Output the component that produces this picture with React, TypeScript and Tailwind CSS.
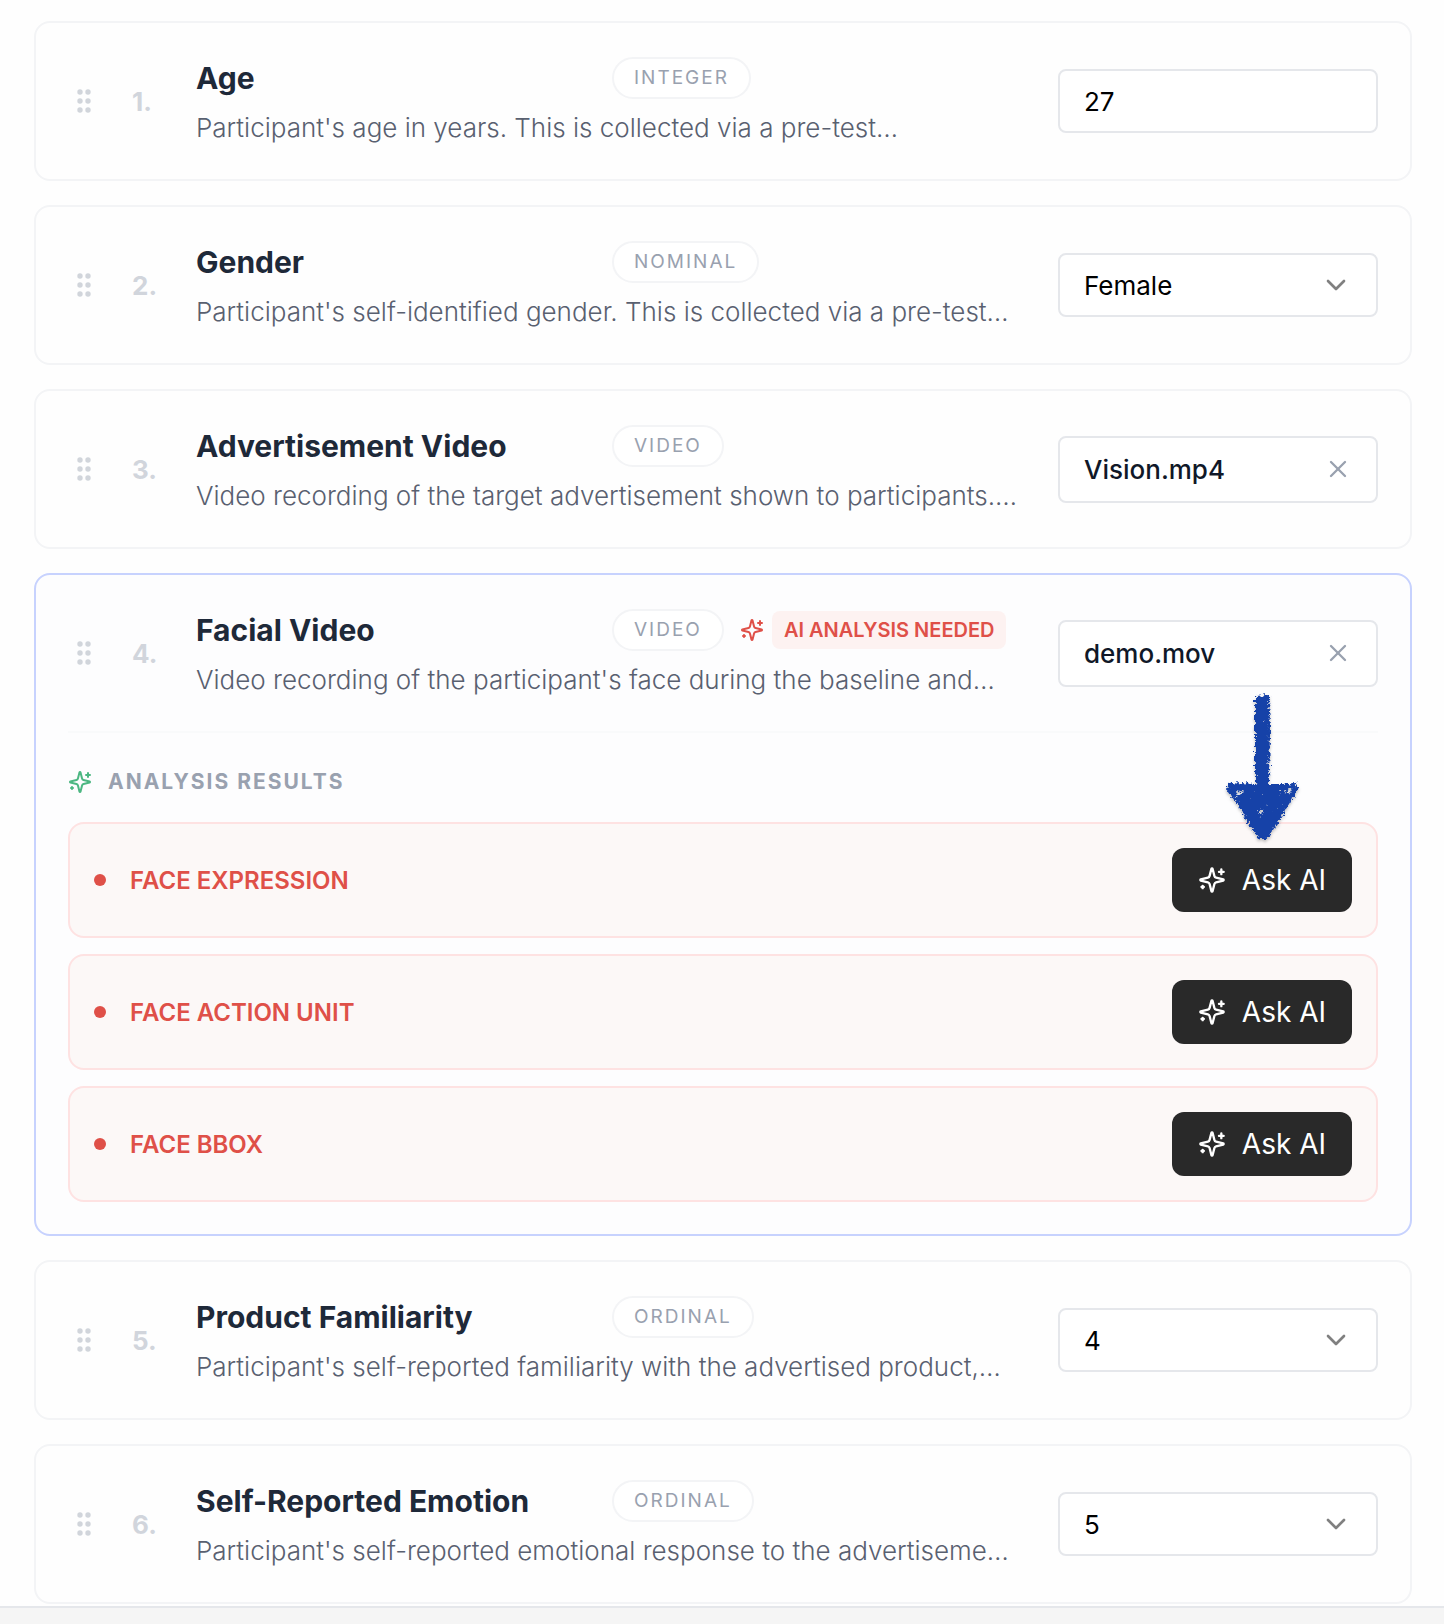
import React from "react";
import { ChevronDown, X } from "lucide-react";

type Control =
  | { kind: "input"; value: string }
  | { kind: "select"; value: string }
  | { kind: "file"; value: string };

type Field = {
  name: string;
  type: string;
  description: string;
  control: Control;
  results?: string[];
};

const fields: Field[] = [
  {
    name: "Age",
    type: "INTEGER",
    description: "Participant's age in years. This is collected via a pre-test…",
    control: { kind: "input", value: "27" },
  },
  {
    name: "Gender",
    type: "NOMINAL",
    description: "Participant's self-identified gender. This is collected via a pre-test…",
    control: { kind: "select", value: "Female" },
  },
  {
    name: "Advertisement Video",
    type: "VIDEO",
    description: "Video recording of the target advertisement shown to participants.…",
    control: { kind: "file", value: "Vision.mp4" },
  },
  {
    name: "Facial Video",
    type: "VIDEO",
    description: "Video recording of the participant's face during the baseline and…",
    control: { kind: "file", value: "demo.mov" },
    results: ["FACE EXPRESSION", "FACE ACTION UNIT", "FACE BBOX"],
  },
  {
    name: "Product Familiarity",
    type: "ORDINAL",
    description: "Participant's self-reported familiarity with the advertised product,…",
    control: { kind: "select", value: "4" },
  },
  {
    name: "Self-Reported Emotion",
    type: "ORDINAL",
    description: "Participant's self-reported emotional response to the advertiseme…",
    control: { kind: "select", value: "5" },
  },
];

function Sparkles({ size, className }: { size: number; className?: string }) {
  return (
    <svg
      width={size}
      height={size}
      viewBox="0 0 24 24"
      fill="none"
      stroke="currentColor"
      strokeWidth="2"
      strokeLinecap="round"
      strokeLinejoin="round"
      aria-hidden="true"
      className={className}
    >
      <path d="M9.937 15.5A2 2 0 0 0 8.5 14.063l-6.135-1.582a.5.5 0 0 1 0-.962L8.5 9.936A2 2 0 0 0 9.937 8.5l1.582-6.135a.5.5 0 0 1 .963 0L14.063 8.5A2 2 0 0 0 15.5 9.937l6.135 1.581a.5.5 0 0 1 0 .964L15.5 14.063a2 2 0 0 0-1.437 1.437l-1.582 6.135a.5.5 0 0 1-.963 0z" />
      <path d="M20 3v4M22 5h-4M4 17v2M5 18H3" />
    </svg>
  );
}

function Grip() {
  return (
    <svg width="14" height="24" viewBox="0 0 14 24" fill="#d1d5db" aria-hidden="true">
      {[3, 12, 21].map((y) => (
        <g key={y}>
          <circle cx="3" cy={y} r="2.7" />
          <circle cx="11" cy={y} r="2.7" />
        </g>
      ))}
    </svg>
  );
}

function FieldControl({ control, label }: { control: Control; label: string }) {
  if (control.kind === "input") {
    return (
      <input
        type="text"
        aria-label={label}
        defaultValue={control.value}
        className="h-16 w-full rounded-lg border-2 border-gray-200 bg-white px-6 text-[26px] text-black"
      />
    );
  }
  if (control.kind === "select") {
    return (
      <div className="relative">
        <select
          aria-label={label}
          defaultValue={control.value}
          className="h-16 w-full appearance-none rounded-lg border-2 border-gray-200 bg-white px-6 text-[26px] text-black"
        >
          <option>{control.value}</option>
        </select>
        <ChevronDown
          size={32}
          strokeWidth={2}
          className="pointer-events-none absolute top-4 right-[26px] text-[#808080]"
        />
      </div>
    );
  }
  return (
    <div className="flex h-[67px] items-center justify-between rounded-lg border-2 border-gray-200 bg-white px-6">
      <span className="text-[26px] font-medium text-gray-900">{control.value}</span>
      <button type="button" aria-label={`Remove ${control.value}`} className="text-gray-400">
        <X size={28} strokeWidth={2} />
      </button>
    </div>
  );
}

function CrayonArrow() {
  return (
    <svg
      width="84"
      height="156"
      viewBox="0 0 84 156"
      aria-hidden="true"
      className="pointer-events-none absolute -top-[134px] right-[73px] z-10"
    >
      <defs>
        <filter id="crayon" x="-10%" y="-10%" width="120%" height="120%">
          <feTurbulence type="fractalNoise" baseFrequency="0.4" numOctaves="3" seed="4" result="noise" />
          <feDisplacementMap
            in="SourceGraphic"
            in2="noise"
            scale="8"
            xChannelSelector="R"
            yChannelSelector="G"
            result="rough"
          />
          <feTurbulence type="fractalNoise" baseFrequency="0.3" numOctaves="2" seed="9" result="grain" />
          <feColorMatrix
            in="grain"
            type="matrix"
            values="0 0 0 0 0  0 0 0 0 0  0 0 0 0 0  12 0 0 0 -9.4"
            result="specks"
          />
          <feComposite in="rough" in2="specks" operator="out" result="worn" />
          <feDropShadow in="worn" dx="0" dy="2" stdDeviation="1.5" floodColor="#000" floodOpacity="0.25" />
        </filter>
      </defs>
      <g filter="url(#crayon)">
        <path
          fill="#1843a8"
          fillRule="evenodd"
          d="M36 6 L50 5 L51 40 L50 94 L62 94 L76 93 L79 100 L70 114 L62 128 L48 149 L40 149 L31 136 L20 116 L8 101 L9 94 L22 93 L36 94 Z M17 103 l6 -3 l2 2 l-6 4 z M66 101 l6 -3 l1 3 l-5 3 z M40 121 l4 -2 l1 4 l-4 1 z"
        />
      </g>
    </svg>
  );
}

function ResultRow({ name, pointed }: { name: string; pointed: boolean }) {
  return (
    <li className="relative flex h-[116px] items-center justify-between rounded-2xl border-2 border-[#fee2e2] bg-[#fcf8f7] px-6">
      <div className="flex items-center gap-6">
        <span className="size-3 rounded-full bg-[#df5048]" />
        <span className="pt-0.5 text-2xl font-semibold text-[#df5048]">{name}</span>
      </div>
      <button
        type="button"
        className="flex h-16 items-center gap-4 rounded-xl bg-[#292929] px-[26px] text-[28px] font-normal text-white"
      >
        <Sparkles size={28} />
        Ask AI
      </button>
      {pointed && <CrayonArrow />}
    </li>
  );
}

function FieldCard({ field, index }: { field: Field; index: number }) {
  return (
    <li
      className={
        field.results
          ? "rounded-2xl border-2 border-[#c7d2fe] bg-[#fdfdfe] px-8 pb-8"
          : "rounded-2xl border-2 border-gray-100 bg-[#fefefe] px-8"
      }
    >
      <div className="flex h-[156px] items-center">
        <div className="flex w-16 shrink-0 pl-[9px]">
          <Grip />
        </div>
        <span className="w-16 shrink-0 text-[26px] font-bold text-gray-300">{index}.</span>
        <div className="min-w-0 flex-1 pt-1">
          <div className="flex h-[42px] items-center">
            <h2 className="w-[416px] shrink-0 text-[30px] font-bold text-gray-800">{field.name}</h2>
            <span className="flex h-[42px] items-center rounded-full border-2 border-gray-100 bg-white px-5 text-[19px] tracking-[2px] text-gray-400">
              {field.type}
            </span>
            {field.results && (
              <span className="ml-4 flex shrink-0 items-center gap-2 text-[#df5048]">
                <Sparkles size={24} />
                <span className="rounded-lg bg-[#fdf2f1] px-3 py-1 text-xl leading-[30px] font-semibold whitespace-nowrap">
                  AI ANALYSIS NEEDED
                </span>
              </span>
            )}
          </div>
          <p className="mt-2 text-[26px] leading-[42px] font-light whitespace-nowrap text-[#596070]">
            {field.description}
          </p>
        </div>
        <div className="w-80 shrink-0">
          <FieldControl control={field.control} label={field.name} />
        </div>
      </div>
      {field.results && (
        <section className="border-t-2 border-[#f9fafb] pt-[33px]">
          <h3 className="flex items-center gap-4 text-[21px] leading-8 font-bold tracking-[2px] text-gray-400">
            <Sparkles size={24} className="text-[#4cb782]" />
            ANALYSIS RESULTS
          </h3>
          <ul className="mt-6 flex flex-col gap-4">
            {field.results.map((name, i) => (
              <ResultRow key={name} name={name} pointed={i === 0} />
            ))}
          </ul>
        </section>
      )}
    </li>
  );
}

export default function App() {
  return (
    <div className="flex min-h-screen flex-col bg-[#fefefe] font-['Inter',sans-serif]">
      <main className="pt-[21px] pr-8 pb-0.5 pl-[34px]">
        <ol className="flex flex-col gap-6">
          {fields.map((field, i) => (
            <FieldCard key={field.name} field={field} index={i + 1} />
          ))}
        </ol>
      </main>
      <footer className="flex-1 border-t-2 border-gray-200 bg-[#f5f5f5]" />
    </div>
  );
}
